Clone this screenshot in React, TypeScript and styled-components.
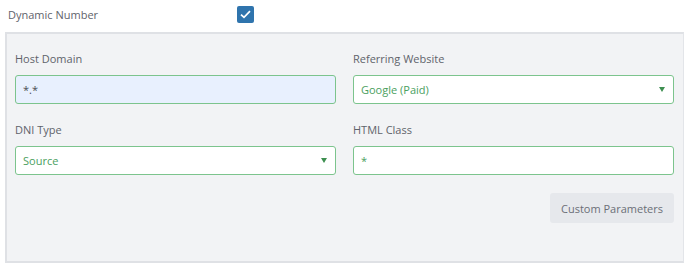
import styled, { createGlobalStyle } from 'styled-components';

const GlobalStyle = createGlobalStyle`
  body {
    margin: 0;
    background: #ffffff;
    font-family: 'Open Sans', 'Noto Sans', sans-serif;
    font-size: 11px;
    color: #5f636b;
  }
`;

const Page = styled.div({
  width: '688px',
  height: '266px',
  boxSizing: 'border-box',
  padding: '0 4px 0 5px',
});

const TopRow = styled.div({
  display: 'flex',
  alignItems: 'center',
  height: '32px',
  paddingLeft: '3px',
});

const TopLabel = styled.span({
  width: '229px',
  fontSize: '11px',
  color: '#5f636b',
  marginTop: '-4px',
});

const CheckBox = styled.span({
  width: '17px',
  height: '17px',
  borderRadius: '2px',
  background: '#2f74ad',
  display: 'flex',
  alignItems: 'center',
  justifyContent: 'center',
  marginTop: '-4px',
});

const Panel = styled.div({
  boxSizing: 'border-box',
  height: '231px',
  background: '#f2f3f5',
  border: '2px solid #dfe1e5',
  borderRight: '1px solid #e3e5e9',
  padding: '16px 9px 0 8px',
  display: 'flex',
  flexDirection: 'column',
});

const Grid = styled.div({
  display: 'grid',
  gridTemplateColumns: '321px 321px',
  columnGap: '17px',
  rowGap: '17px',
});

const Field = styled.div({
  display: 'flex',
  flexDirection: 'column',
  gap: '7px',
});

const Label = styled.label({
  fontSize: '11px',
  lineHeight: '18px',
  color: '#5f636b',
});

const Box = styled.div<{ $fill?: string; $color?: string }>(({ $fill, $color }) => ({
  boxSizing: 'border-box',
  height: '29px',
  border: '1px solid #7cc48d',
  borderRadius: '3px',
  background: $fill || '#ffffff',
  color: $color || '#4aa05e',
  display: 'flex',
  alignItems: 'center',
  justifyContent: 'space-between',
  padding: '0 7px',
  fontSize: '11px',
}));

const Caret = styled.span({
  width: 0,
  height: 0,
  borderLeft: '3px solid transparent',
  borderRight: '3px solid transparent',
  borderTop: '5px solid #3d8f50',
  marginRight: '1px',
});

const Actions = styled.div({
  display: 'flex',
  justifyContent: 'flex-end',
  marginTop: '18px',
});

const Button = styled.button({
  boxSizing: 'border-box',
  width: '124px',
  height: '30px',
  border: 'none',
  borderRadius: '3px',
  background: '#e6e8ec',
  color: '#6b6f77',
  fontFamily: "'Open Sans', 'Noto Sans', sans-serif",
  fontSize: '11px',
  padding: 0,
});

const App = () => {
  return (
    <>
      <GlobalStyle />
      <Page>
        <TopRow>
          <TopLabel>Dynamic Number</TopLabel>
          <CheckBox>
            <svg width="11" height="9" viewBox="0 0 11 9">
              <path d="M1 4.6 L4 7.4 L10 1.2" fill="none" stroke="#fff" strokeWidth="1.7" />
            </svg>
          </CheckBox>
        </TopRow>
        <Panel>
          <Grid>
            <Field>
              <Label>Host Domain</Label>
              <Box $fill="#e8f0fe" $color="#4a4d52">*.*</Box>
            </Field>
            <Field>
              <Label>Referring Website</Label>
              <Box>
                Google (Paid)
                <Caret />
              </Box>
            </Field>
            <Field>
              <Label>DNI Type</Label>
              <Box>
                Source
                <Caret />
              </Box>
            </Field>
            <Field>
              <Label>HTML Class</Label>
              <Box>*</Box>
            </Field>
          </Grid>
          <Actions>
            <Button>Custom Parameters</Button>
          </Actions>
        </Panel>
      </Page>
    </>
  );
};

export default App;
